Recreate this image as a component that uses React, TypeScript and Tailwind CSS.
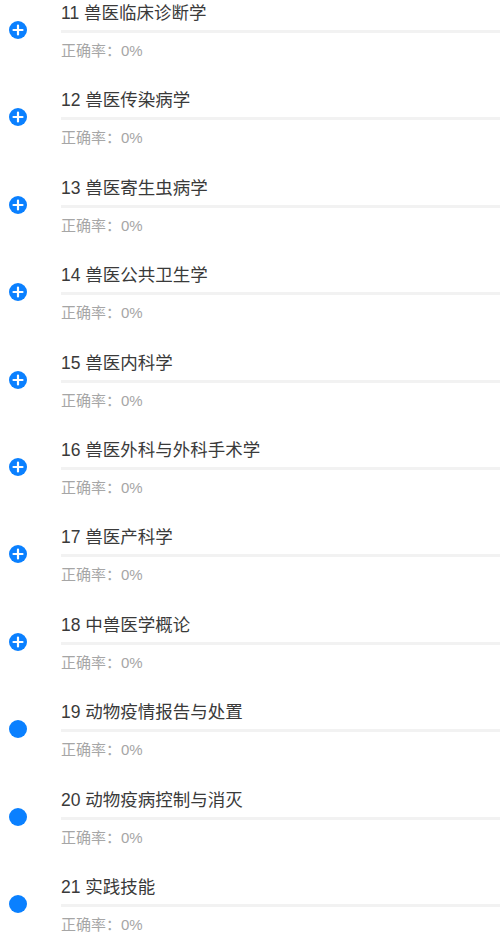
import React from "react";

const items = [
  { t: "11 兽医临床诊断学", plus: true },
  { t: "12 兽医传染病学", plus: true },
  { t: "13 兽医寄生虫病学", plus: true },
  { t: "14 兽医公共卫生学", plus: true },
  { t: "15 兽医内科学", plus: true },
  { t: "16 兽医外科与外科手术学", plus: true },
  { t: "17 兽医产科学", plus: true },
  { t: "18 中兽医学概论", plus: true },
  { t: "19 动物疫情报告与处置", plus: false },
  { t: "20 动物疫病控制与消灭", plus: false },
  { t: "21 实践技能", plus: false },
];

export default function App() {
  return (
    <div
      className="w-[500px] h-[950px] overflow-hidden bg-white"
      style={{ fontFamily: '"Liberation Sans", "Noto Sans CJK SC", sans-serif' }}
    >
      {items.map((it) => (
        <div key={it.t} className="flex h-[87.4px]">
          <div className="w-[61px] shrink-0 flex justify-start pl-[9px] pt-[21px]">
            <div className="w-[18px] h-[18px] rounded-full bg-[#0a80ff] flex items-center justify-center">
              {it.plus && (
                <svg width="12" height="12" viewBox="0 0 12 12">
                  <path d="M6 1.5V10.5M1.5 6H10.5" stroke="#fff" strokeWidth="2.2" strokeLinecap="round" />
                </svg>
              )}
            </div>
          </div>
          <div className="flex-1 flex flex-col">
            <div className="h-[22px] mt-[2px] leading-[22px] text-[17.5px] text-[#3a3a3a] whitespace-nowrap">{it.t}</div>
            <div className="h-[3px] mt-[6px] bg-[#f2f2f2]" />
            <div className="mt-[8px] h-[20px] leading-[20px] text-[15px] text-[#a6a6a6] whitespace-nowrap">正确率：0%</div>
          </div>
        </div>
      ))}
    </div>
  );
}
